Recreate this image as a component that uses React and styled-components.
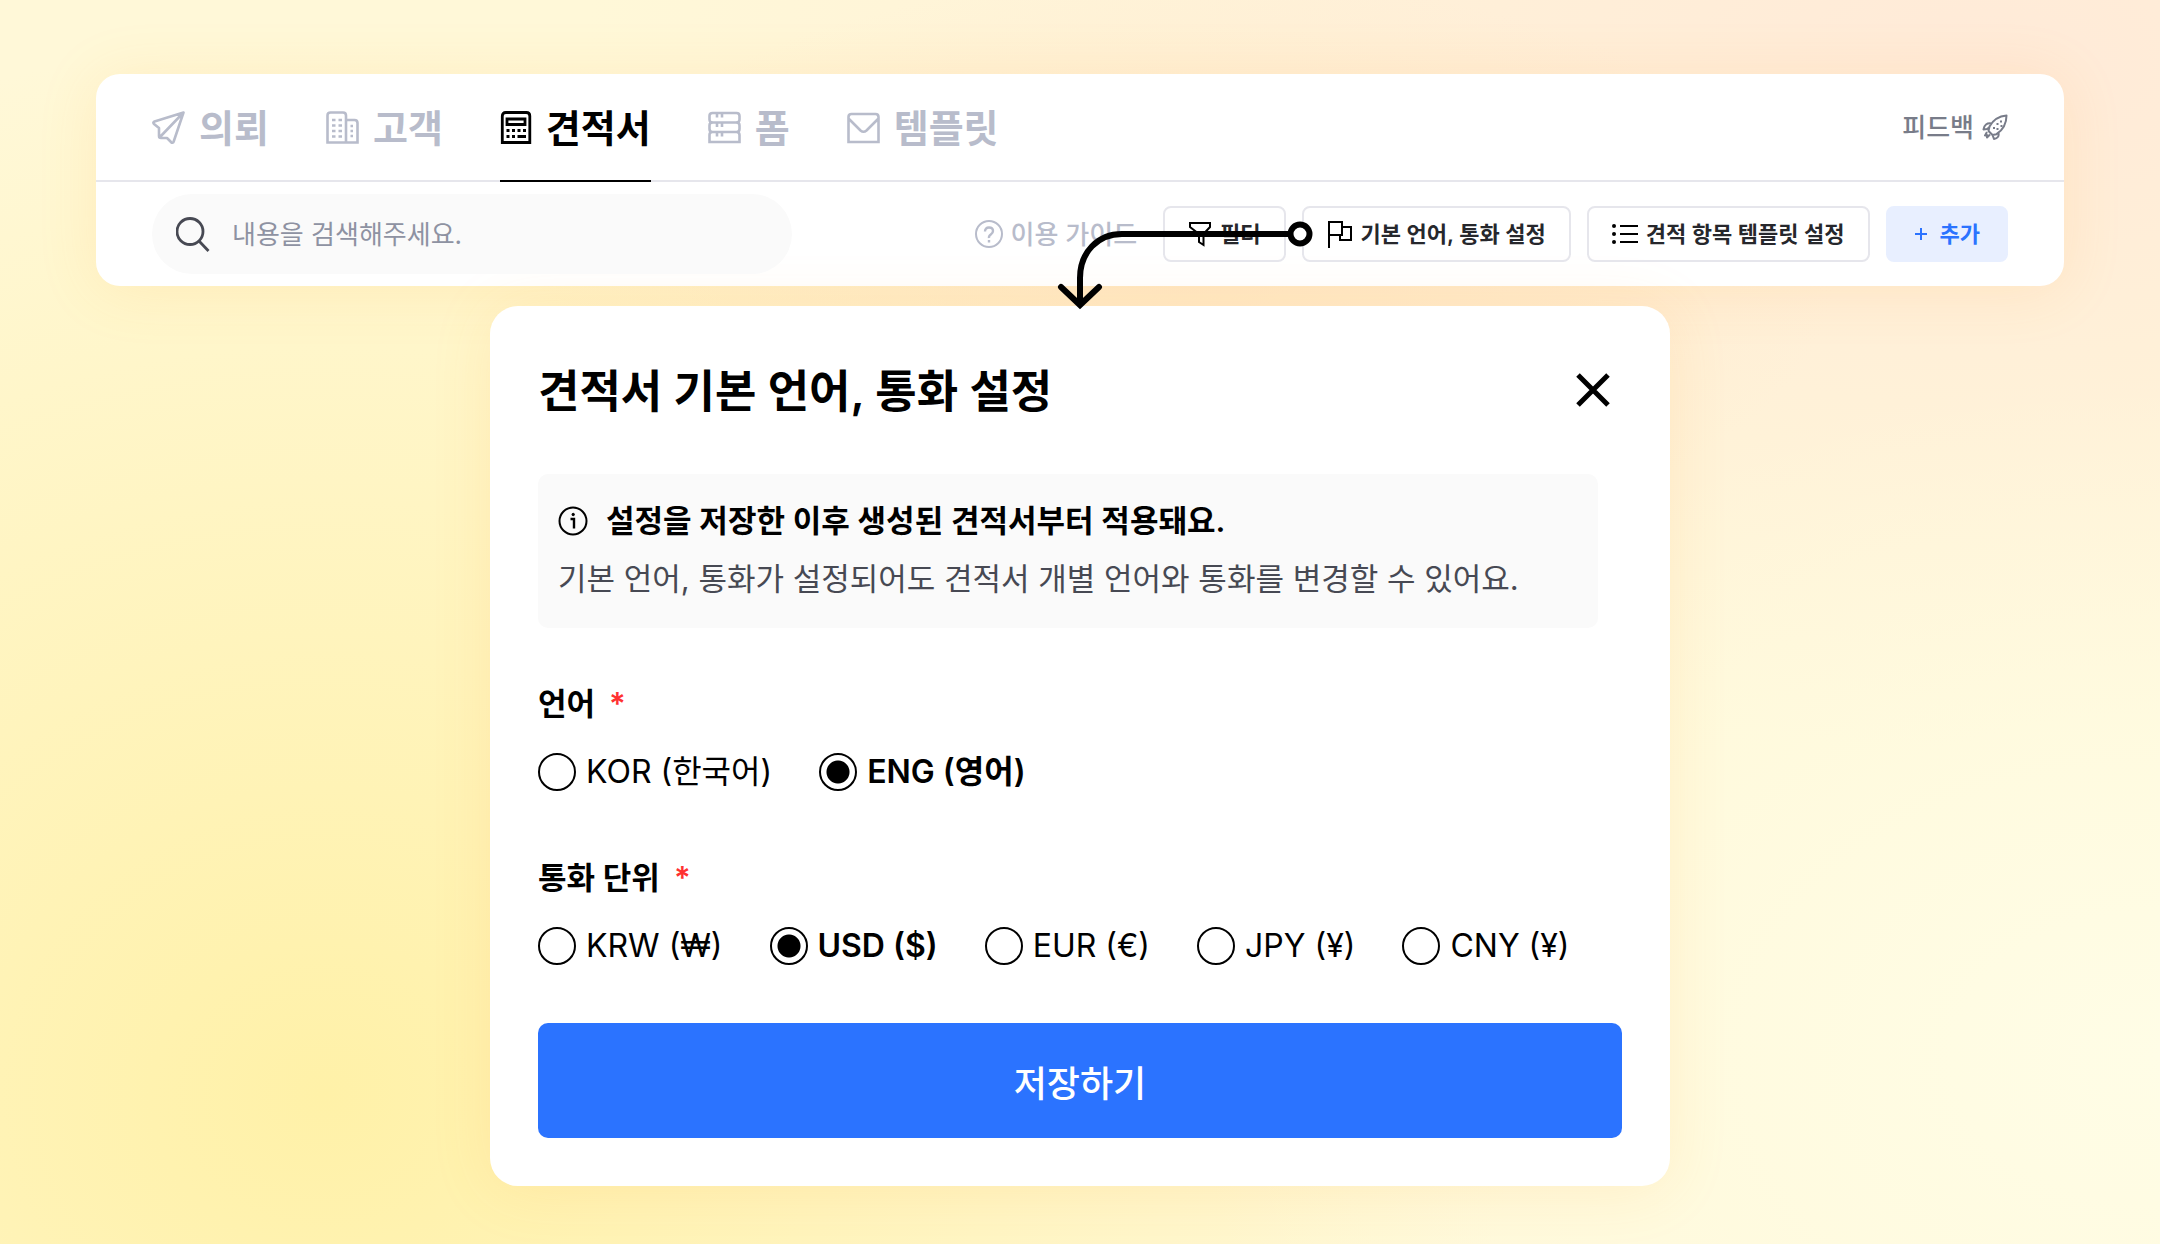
import React, { Component } from 'react'
import styled, { createGlobalStyle } from 'styled-components'

const GlobalStyle = createGlobalStyle`
  * {
    box-sizing: border-box;
    margin: 0;
    padding: 0;
  }
  body {
    font-family: Inter, "Noto Sans CJK KR", sans-serif;
    color: #000;
  }
  button, input {
    font: inherit;
    border: none;
    background: none;
  }
  a {
    text-decoration: none;
  }
  svg {
    display: block;
    flex-shrink: 0;
  }
`
const Page = styled.div`
  min-height: 100vh;
  padding: 74px 96px 56px;
  background:
    radial-gradient(ellipse 30% 24% at 55% 22%, rgba(255, 230, 196, 0.6), rgba(255, 230, 196, 0)),
    radial-gradient(ellipse 45% 55% at 100% 85%, rgba(255, 253, 230, 1), rgba(255, 253, 230, 0)),
    radial-gradient(ellipse 55% 85% at 15% 88%, #fff1a8, rgba(255, 241, 168, 0)),
    radial-gradient(ellipse 65% 55% at 92% 5%, #ffead8, rgba(255, 234, 216, 0)),
    #fff8d8;
`
const Panel = styled.header`
  background: #fff;
  border-radius: 24px;
  box-shadow: 0 4px 60px rgba(255, 170, 60, 0.14);
`
const TabBar = styled.div`
  display: flex;
  justify-content: space-between;
  height: 108px;
  padding: 0 56px;
  border-bottom: 2px solid #e6e6ec;
`
const Tabs = styled.nav`
  display: flex;
  gap: 57px;
`
const Label = styled.span`
  padding-bottom: 4px;
`
const Tab = styled.a`
  display: flex;
  align-items: center;
  gap: 14px;
  height: 108px;
  font-size: 38px;
  font-weight: 600;
  color: ${props => props.$active ? '#000' : '#b8bccb'};
  border-bottom: 2px solid ${props => props.$active ? '#000' : 'transparent'};
`
const Feedback = styled.a`
  display: flex;
  align-items: center;
  gap: 8px;
  font-size: 26px;
  font-weight: 500;
  color: #787c89;
`
const ToolBar = styled.div`
  display: flex;
  align-items: center;
  gap: 16px;
  padding: 12px 56px;
`
const SearchBox = styled.label`
  display: flex;
  align-items: center;
  gap: 22px;
  width: 640px;
  height: 80px;
  padding: 0 24px;
  margin-right: auto;
  border-radius: 40px;
  background: #fafafa;
  color: #474953;
`
const SearchInput = styled.input`
  flex: 1;
  min-width: 0;
  font-size: 26px;
  outline: none;
  &::placeholder {
    color: #8e92a2;
    opacity: 1;
  }
`
const Guide = styled.a`
  display: flex;
  align-items: center;
  gap: 8px;
  margin-right: 10px;
  font-size: 26px;
  font-weight: 500;
  color: #b8bccb;
`
const ToolButton = styled.button`
  display: flex;
  align-items: center;
  gap: 8px;
  height: 56px;
  padding: 0 23px;
  font-size: 22px;
  font-weight: 600;
  white-space: nowrap;
  color: #26272c;
  border: 2px solid #e6e6ec;
  border-radius: 8px;
  svg {
    color: #000;
  }
`
const AddButton = styled(ToolButton)`
  gap: 12px;
  padding: 0 26px;
  color: #2b73ff;
  background: #e8efff;
  border-color: #e8efff;
  svg {
    color: inherit;
  }
`
const FlagButton = styled(ToolButton)`
  position: relative;
`
const Arrow = styled.svg`
  position: absolute;
  left: -248px;
  top: 10px;
`
const Modal = styled.form`
  max-width: 1180px;
  margin: 20px auto 0;
  padding: 48px;
  background: #fff;
  border-radius: 28px;
  box-shadow: 0 4px 60px rgba(255, 170, 60, 0.14);
`
const ModalHead = styled.div`
  display: flex;
  align-items: center;
  justify-content: space-between;
  height: 72px;
  padding-right: 12px;
  h1 {
    padding-bottom: 4px;
    font-size: 45px;
    font-weight: 600;
  }
`
const CloseButton = styled.button`
  cursor: pointer;
`
const Notice = styled.div`
  margin: 48px 24px 0 0;
  padding: 18px 20px;
  height: 154px;
  border-radius: 10px;
  background: #fafafa;
  font-size: 31px;
  line-height: 58px;
  color: #474953;
`
const NoticeTitle = styled.strong`
  display: flex;
  align-items: center;
  gap: 18px;
  font-weight: 600;
  color: #000;
`
const Field = styled.fieldset`
  border: none;
  margin-top: ${props => props.$top}px;
  font-size: 31px;
  line-height: 48px;
`
const Legend = styled.legend`
  font-weight: 600;
  span {
    margin-left: 14px;
    color: #ff3131;
  }
`
const Options = styled.div`
  display: flex;
  flex-wrap: wrap;
  gap: 47px;
  margin-top: 20px;
  font-size: 32px;
`
const Option = styled.label`
  display: flex;
  align-items: center;
  gap: 10px;
  font-weight: ${props => props.$checked ? 600 : 400};
`
const Radio = styled.input`
  appearance: none;
  width: 38px;
  height: 38px;
  border: 2px solid #000;
  border-radius: 50%;
  &:checked {
    background: radial-gradient(circle, #000 11px, transparent 12px);
  }
`
const SaveButton = styled.button`
  display: block;
  width: 100%;
  height: 115px;
  margin-top: 53px;
  border-radius: 10px;
  font-size: 36px;
  font-weight: 500;
  color: #fff;
  background: #2b73ff;
`

const stroke = { fill: 'none', stroke: 'currentColor', strokeWidth: 2 }

const PlaneIcon = () => (
  <svg width="33" height="33" viewBox="0 0 33 33" {...stroke} strokeWidth="2.6" strokeLinejoin="round">
    <path d="M31.5 1.500 2.500 10.500Q.5 11.500 2 13L7 17v8q0 2 2 2h6l4.500 4.500q1.500.8 2.200-1zM31.500 1.500 7.500 26.500" />
  </svg>
)

const BuildingIcon = () => (
  <svg width="33" height="33" viewBox="0 0 33 33" {...stroke} strokeWidth="2.6">
    <path d="M1.500 31.500V4.500q0-3 3-3H17q3 0 3 3v27zM20 9h8.500q3 0 3 3v19.500H20" />
    <path d="M6 9h3.500M12.500 9H16M6 14.500h3.500M12.500 14.500H16M6 20h3.500M12.500 20H16M6 25.500h3.500M12.500 25.500H16M24.500 15h2.500M24.500 20h2.500M24.500 25h2.500" />
  </svg>
)

const CalculatorIcon = () => (
  <svg width="32" height="33" viewBox="0 0 32 33" {...stroke} strokeWidth="2.8">
    <path d="M2.300 31.500V5q0-3.500 3.500-3.500h20.500q3.500 0 3.500 3.500v26.500zM7 8h18v5.500H7z" />
    <path d="M6.500 19.500h3M12 19.500h3M17.500 19.500h3M23 19.500h3M6.500 25.500h3M12 25.500h3M17.500 25.500h8.500" />
  </svg>
)

const ServerIcon = () => (
  <svg width="33" height="33" viewBox="0 0 33 33" {...stroke} strokeWidth="2.6">
    <path d="M4.500 11.500q-3 0-3-3V5q0-3 3-3h24q3 0 3 3v3.500q0 3-3 3z" />
    <path d="M4.500 11.500q-3 0-3 3v3.500q0 3 3 3h24q3 0 3-3v-3.500q0-3-3-3M4.500 21q-3 0-3 3v7h30v-7q0-3-3-3M9 2v4.500M14 2v4.500M9 12v4M14 12v4M9 21v4.500M14 21v4.500" />
  </svg>
)

const MailIcon = () => (
  <svg width="33" height="33" viewBox="0 0 33 33" {...stroke} strokeWidth="2.6">
    <path d="M1.500 31V6q0-3 3-3h24q3 0 3 3v25zM1.500 7.500l12 12q3 2.500 6 0l12-12" />
  </svg>
)

const RocketIcon = () => (
  <svg width="26" height="26" viewBox="0 0 26 26" {...stroke} strokeLinejoin="round">
    <path d="M24.500 1.500Q13 2.500 7.500 12.500L6.500 17l4 4 4-.8Q24.500 13.500 24.500 1.500zM9.500 9.500q-7-1-8 6l3.500-.5 2-1.500M16.500 19q1 5-4.500 6l-1.500-4M5 18l-2 3.500 2-.5v2.500l3-3" />
    <path d="M19 6.500v2M15.500 9v2M19.500 11v2M12 13v2M15.500 14v2" />
  </svg>
)

const SearchIcon = () => (
  <svg width="34" height="38" viewBox="0 0 34 38" {...stroke} strokeWidth="2.8">
    <circle cx="14" cy="16.500" r="13" />
    <path d="M23 26l9.500 10" />
  </svg>
)

const HelpIcon = () => (
  <svg width="28" height="28" viewBox="0 0 28 28" {...stroke}>
    <circle cx="14" cy="14" r="13" />
    <path d="M10 11.500q0-4 4-4t4 3.500q0 2-2.200 3.500T14 18M14 20v2.500" strokeWidth="2.400" />
  </svg>
)

const FilterIcon = () => (
  <svg width="24" height="28" viewBox="0 0 24 28" {...stroke}>
    <path d="M2 3h20v4l-6.500 7v11l-4.500-3v-8L2 7z" />
  </svg>
)

const FlagIcon = () => (
  <svg width="26" height="28" viewBox="0 0 26 28" {...stroke}>
    <path d="M2 28V2h13v13H2M15 7h9v13H13v-5" />
  </svg>
)

const ListIcon = () => (
  <svg width="26" height="22" viewBox="0 0 26 22" {...stroke}>
    <path d="M8 3h18M8 11h18M8 19h18" />
    <path d="M2 3h.01M2 11h.01M2 19h.01" strokeWidth="4" strokeLinecap="round" />
  </svg>
)

const PlusIcon = () => (
  <svg width="14" height="14" viewBox="0 0 14 14" {...stroke}>
    <path d="M7 1v12M1 7h12" />
  </svg>
)

const CloseIcon = () => (
  <svg width="34" height="34" viewBox="0 0 34 34" {...stroke} strokeWidth="5">
    <path d="M2 2l30 30M32 2 2 32" />
  </svg>
)

const InfoIcon = () => (
  <svg width="30" height="30" viewBox="0 0 30 30" {...stroke}>
    <circle cx="15" cy="15" r="13.500" />
    <path d="M12.500 13h3.500v9.500" strokeWidth="2.400" />
    <circle cx="15.200" cy="8.500" r="1.200" fill="currentColor" strokeWidth="1" />
  </svg>
)

const tabs = [
  { label: '의뢰', icon: PlaneIcon },
  { label: '고객', icon: BuildingIcon },
  { label: '견적서', icon: CalculatorIcon },
  { label: '폼', icon: ServerIcon },
  { label: '템플릿', icon: MailIcon }
]

const languages = [
  { value: 'KOR', label: 'KOR (한국어)' },
  { value: 'ENG', label: 'ENG (영어)' }
]

const currencies = [
  { value: 'KRW', label: 'KRW (₩)' },
  { value: 'USD', label: 'USD ($)' },
  { value: 'EUR', label: 'EUR (€)' },
  { value: 'JPY', label: 'JPY (¥)' },
  { value: 'CNY', label: 'CNY (¥)' }
]

class App extends Component {
  state = {
    language: 'ENG',
    currency: 'USD'
  }

  renderOptions = (name, options) => (
    <Options>
      {options.map(({ value, label }) => (
        <Option key={value} $checked={this.state[name] === value}>
          <Radio
            type="radio"
            name={name}
            value={value}
            checked={this.state[name] === value}
            onChange={() => this.setState({ [name]: value })}
          />
          {label}
        </Option>
      ))}
    </Options>
  )

  render() {
    return (
      <Page>
        <GlobalStyle />
        <Panel>
          <TabBar>
            <Tabs>
              {tabs.map(({ label, icon: Icon }) => (
                <Tab key={label} href="#" $active={label === '견적서'}>
                  <Icon />
                  <Label>{label}</Label>
                </Tab>
              ))}
            </Tabs>
            <Feedback href="#"><Label>피드백</Label><RocketIcon /></Feedback>
          </TabBar>
          <ToolBar>
            <SearchBox>
              <SearchIcon />
              <SearchInput type="text" aria-label="검색" placeholder="내용을 검색해주세요." />
            </SearchBox>
            <Guide href="#"><HelpIcon /><Label>이용 가이드</Label></Guide>
            <ToolButton type="button"><FilterIcon /><Label>필터</Label></ToolButton>
            <FlagButton type="button">
              <FlagIcon /><Label>기본 언어, 통화 설정</Label>
              {/* connector from this button down to the modal */}
              <Arrow width="260" height="96" viewBox="0 0 260 96" fill="none" stroke="#000" strokeWidth="6" strokeLinecap="round">
                <path d="M233 16H66C42 16 24 34 24 60V86M5 69l19 18 19-18" />
                <circle cx="244" cy="16" r="9.500" fill="#fff" />
              </Arrow>
            </FlagButton>
            <ToolButton type="button"><ListIcon /><Label>견적 항목 템플릿 설정</Label></ToolButton>
            <AddButton type="button"><PlusIcon /><Label>추가</Label></AddButton>
          </ToolBar>
        </Panel>
        <Modal onSubmit={e => e.preventDefault()}>
          <ModalHead>
            <h1>견적서 기본 언어, 통화 설정</h1>
            <CloseButton type="button" aria-label="닫기"><CloseIcon /></CloseButton>
          </ModalHead>
          <Notice>
            <NoticeTitle><InfoIcon />설정을 저장한 이후 생성된 견적서부터 적용돼요.</NoticeTitle>
            <p>기본 언어, 통화가 설정되어도 견적서 개별 언어와 통화를 변경할 수 있어요.</p>
          </Notice>
          <Field $top={52}>
            <Legend>언어<span>*</span></Legend>
            {this.renderOptions('language', languages)}
          </Field>
          <Field $top={58}>
            <Legend>통화 단위<span>*</span></Legend>
            {this.renderOptions('currency', currencies)}
          </Field>
          <SaveButton type="submit">저장하기</SaveButton>
        </Modal>
      </Page>
    )
  }
}

export default App
